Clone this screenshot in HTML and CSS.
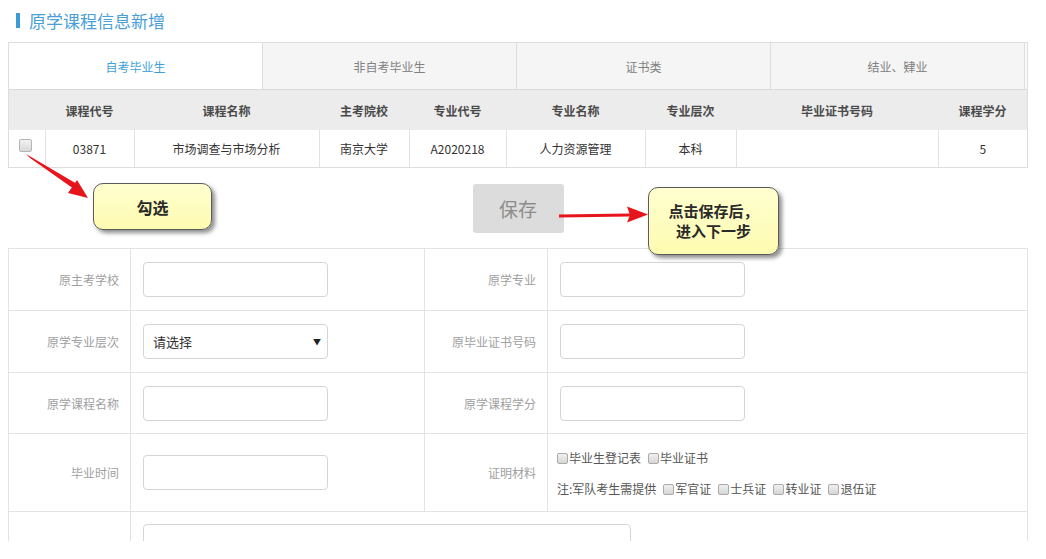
FILE: index.html
```html
<!DOCTYPE html>
<html lang="zh">
<head>
<meta charset="utf-8">
<title>原学课程信息新增</title>
<link rel="stylesheet" href="styles.css">
</head>
<body>
<div class="page">
  <h1 class="title"><span class="bar"></span>原学课程信息新增</h1>

  <div class="panel">
    <div class="tabs">
      <div class="tab active">自考毕业生</div>
      <div class="tab">非自考毕业生</div>
      <div class="tab">证书类</div>
      <div class="tab">结业、肄业</div>
      <div class="tab-rest"></div>
    </div>
    <table class="grid">
      <colgroup>
        <col style="width:36px"><col style="width:89px"><col style="width:185px"><col style="width:90px"><col style="width:97px"><col style="width:139px"><col style="width:91px"><col style="width:202px"><col>
      </colgroup>
      <thead>
        <tr><th></th><th>课程代号</th><th>课程名称</th><th>主考院校</th><th>专业代号</th><th>专业名称</th><th>专业层次</th><th>毕业证书号码</th><th>课程学分</th></tr>
      </thead>
      <tbody>
        <tr><td class="cb-cell"><span class="cb"></span></td><td>03871</td><td>市场调查与市场分析</td><td>南京大学</td><td>A2020218</td><td>人力资源管理</td><td>本科</td><td></td><td>5</td></tr>
      </tbody>
    </table>
  </div>

  <div class="actions"><button class="save">保存</button></div>

  <table class="form">
    <colgroup><col style="width:122px"><col style="width:294px"><col style="width:123px"><col></colgroup>
    <tr class="r1">
      <td class="lbl">原主考学校</td><td class="fld"><div class="input"></div></td>
      <td class="lbl">原学专业</td><td class="fld"><div class="input"></div></td>
    </tr>
    <tr class="r2">
      <td class="lbl">原学专业层次</td><td class="fld"><div class="input select"><span>请选择</span><span class="caret">▼</span></div></td>
      <td class="lbl">原毕业证书号码</td><td class="fld"><div class="input"></div></td>
    </tr>
    <tr class="r3">
      <td class="lbl">原学课程名称</td><td class="fld"><div class="input"></div></td>
      <td class="lbl">原学课程学分</td><td class="fld"><div class="input"></div></td>
    </tr>
    <tr class="r4">
      <td class="lbl">毕业时间</td><td class="fld"><div class="input"></div></td>
      <td class="lbl">证明材料</td>
      <td class="fld checks">
        <div class="line"><span class="sq first"></span>毕业生登记表<span class="sq"></span>毕业证书</div>
        <div class="line">注:军队考生需提供<span class="sq"></span>军官证<span class="sq"></span>士兵证<span class="sq"></span>转业证<span class="sq"></span>退伍证</div>
      </td>
    </tr>
    <tr class="r5">
      <td class="lbl"></td><td class="fld" colspan="3"><div class="textarea"></div></td>
    </tr>
  </table>

  <div class="callout c1">勾选</div>
  <div class="callout c2">点击保存后，<br>进入下一步</div>

  <svg class="arrows" width="1046" height="559" viewBox="0 0 1046 559">
    <polygon points="26,154 30,158 74,189 77,184" fill="#e8141c"/>
    <polygon points="88,198 68,193 77,180" fill="#e8141c"/>
    <polygon points="559,214.5 559,217.5 630,216.5 630,213.5" fill="#e8141c"/>
    <polygon points="648,214.5 627,206.5 630,215 627,222.5" fill="#e8141c"/>
  </svg>
</div>
</body>
</html>
```

FILE: styles.css
```css
html, body {
  margin: 0;
  padding: 0;
  background: #fff;
}
.page {
  position: relative;
  width: 1046px;
  height: 541px;
  overflow: hidden;
  font-family: "Noto Sans CJK SC", "Noto Sans", sans-serif;
  font-size: 12px;
  color: #333;
}
.title {
  margin: 0;
  height: 42px;
  box-sizing: border-box;
  padding: 0 0 2px 16px;
  display: flex;
  align-items: center;
  font-size: 17px;
  font-weight: normal;
  color: #4aa0d6;
}
.title .bar {
  display: inline-block;
  width: 4px;
  height: 15px;
  background: #3b9ad8;
  margin-right: 9px;
}
.panel {
  margin-left: 8px;
  width: 1020px;
  box-sizing: border-box;
  border: 1px solid #dedede;
}
.tabs {
  display: flex;
  height: 46px;
  border-bottom: 1px solid #d9d9d9;
  background: #f5f5f5;
}
.tab {
  width: 254px;
  box-sizing: border-box;
  border-left: 1px solid #dedede;
  display: flex;
  align-items: center;
  justify-content: center;
  color: #808080;
  font-size: 12px;
}
.tab.active {
  width: 253px;
  border-left: none;
  background: #fff;
  color: #3fa0dc;
}
.tab-rest {
  flex: 1;
  border-left: 1px solid #dedede;
  background: #fafafa;
}
.grid {
  width: 100%;
  table-layout: fixed;
  border-collapse: collapse;
}
.grid th {
  height: 40px;
  padding: 0;
  background: #ececec;
  font-weight: bold;
  color: #4a4a4a;
  font-size: 12px;
  text-align: center;
}
.grid td {
  height: 37px;
  padding: 0;
  text-align: center;
  border-left: 1px solid #e2e2e2;
  color: #333;
}
.grid td.cb-cell {
  border-left: none;
  text-align: left;
  vertical-align: top;
  padding: 9px 0 0 10px;
  height: 28px;
}
.cb {
  display: block;
  width: 11px;
  height: 11px;
  border: 1px solid #b5b5b5;
  border-radius: 2px;
  background: linear-gradient(#f2f2f2, #d8d8d8);
}
.actions {
  display: flex;
  justify-content: center;
  padding: 16px 0 15px 0;
  margin-left: 8px;
  width: 1020px;
}
.save {
  width: 91px;
  height: 49px;
  border: none;
  border-radius: 3px;
  background: #dcdcdc;
  color: #8c8c8c;
  font-family: "Noto Sans CJK SC", sans-serif;
  font-size: 19px;
  padding: 0;
}
.form {
  margin-left: 8px;
  width: 1020px;
  table-layout: fixed;
  border-collapse: collapse;
}
.form td {
  border: 1px solid #e3e3e3;
  padding: 0;
}
.form .lbl {
  text-align: right;
  padding-right: 11px;
  color: #a0a0a0;
  font-size: 12px;
}
.form .fld {
  padding-left: 12px;
}
.r1 td, .r2 td { height: 61px; }
.r3 td { height: 60px; }
.r4 td { height: 77px; }
.r5 td { height: 60px; vertical-align: top; }
.input {
  width: 185px;
  height: 35px;
  box-sizing: border-box;
  border: 1px solid #d5d5d5;
  border-radius: 4px;
  background: #fff;
}
.select {
  display: flex;
  align-items: center;
  justify-content: space-between;
  padding: 0 6px 0 9px;
  color: #333;
  font-size: 13px;
}
.select .caret {
  font-size: 8px;
  color: #222;
}
.checks {
  color: #555;
  font-size: 12px;
}
.form .checks {
  padding-left: 9px;
}
.checks .line {
  height: 31px;
  line-height: 31px;
  white-space: nowrap;
}
.sq {
  display: inline-block;
  width: 9px;
  height: 9px;
  border: 1px solid #aaa;
  border-radius: 2px;
  background: linear-gradient(#f0f0f0, #d6d6d6);
  vertical-align: -1px;
  margin: 0 1px 0 7px;
}
.sq.first {
  margin-left: 0;
}
.textarea {
  margin-top: 12px;
  width: 486px;
  height: 60px;
  border: 1px solid #d5d5d5;
  border-radius: 4px;
}
.callout {
  position: absolute;
  box-sizing: border-box;
  border: 1.5px solid #5a5a5a;
  border-radius: 10px;
  background: linear-gradient(#ffffd0, #fdfbb0);
  box-shadow: 3px 3px 4px rgba(0, 0, 0, 0.45);
  display: flex;
  align-items: center;
  justify-content: center;
  text-align: center;
  font-weight: bold;
  font-size: 16px;
  color: #2a2a2a;
}
.c1 {
  left: 93px;
  top: 183px;
  width: 119px;
  height: 47px;
}
.c2 {
  left: 648px;
  top: 187px;
  width: 131px;
  height: 68px;
  line-height: 20px;
  font-size: 15px;
}
.arrows {
  position: absolute;
  left: 0;
  top: 0;
  pointer-events: none;
}
```
